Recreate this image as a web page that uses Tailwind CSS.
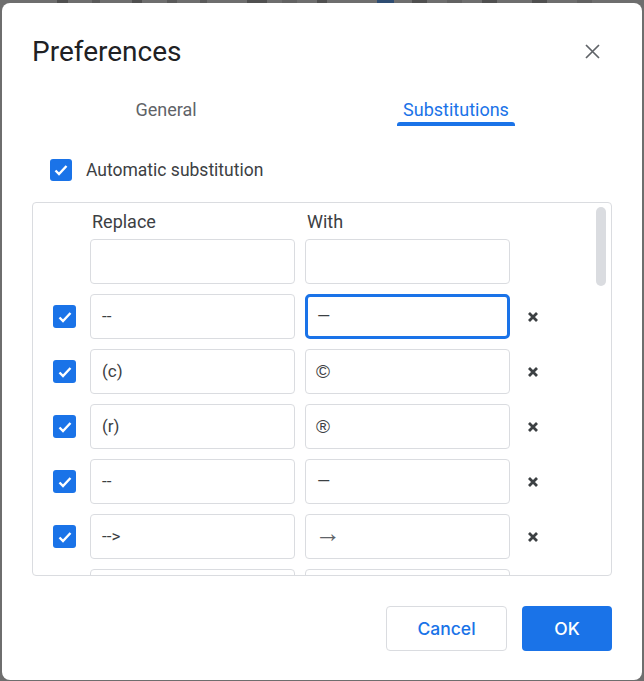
<!DOCTYPE html>
<html lang="en">
<head>
<meta charset="UTF-8">
<title>Preferences</title>
<script src="https://cdn.jsdelivr.net/npm/@tailwindcss/browser@4"></script>
</head>
<body class="bg-[#6e6e6e] h-[681px] w-[644px] overflow-hidden font-['Roboto',sans-serif]">

<!-- Bits of the toolbar behind the backdrop -->
<div class="flex h-[3px] items-start">
    <span class="ml-[57px] w-[11px] h-[3px] bg-[#505050]"></span>
    <span class="ml-[24px] w-[8px] h-[3px] bg-[#5a5a5a]"></span>
    <span class="ml-[32px] w-[10px] h-[3px] bg-[#505050]"></span>
    <span class="ml-[25px] w-[10px] h-[3px] bg-[#5a5a5a]"></span>
    <span class="ml-[23px] w-[7px] h-[3px] bg-[#5a5a5a]"></span>
    <span class="ml-[40px] w-[20px] h-[3px] bg-[#505050]"></span>
    <span class="ml-[15px] w-[15px] h-[3px] bg-[#626262]"></span>
    <span class="ml-[20px] w-[10px] h-[3px] bg-[#505050]"></span>
    <span class="ml-[50px] w-[17px] h-[3px] bg-[#2f4d72]"></span>
    <span class="ml-[18px] w-[15px] h-[3px] bg-[#505050]"></span>
    <span class="ml-[20px] w-[15px] h-[3px] bg-[#626262]"></span>
    <span class="ml-[20px] w-[15px] h-[3px] bg-[#505050]"></span>
    <span class="ml-[35px] w-[15px] h-[3px] bg-[#505050]"></span>
    <span class="ml-[30px] w-[15px] h-[3px] bg-[#626262]"></span>
</div>

<!-- Dialog -->
<div class="ml-[2px] w-[640px] h-[677px] bg-white rounded-[8px] flex flex-col pl-[30px] pr-[30px]">

    <!-- Title -->
    <div class="flex items-center justify-between h-[72px] pt-[24px]">
        <h1 class="text-[28px] leading-[40px] pt-[1px] text-[#202124]">Preferences</h1>
        <svg class="w-[15px] h-[15px] mr-[12px]" viewBox="0 0 15 15" fill="none" stroke="#5f6368" stroke-width="1.7"><path d="M1 1l13 13M14 1L1 14"/></svg>
    </div>

    <!-- Tabs -->
    <div class="flex mt-[16px] h-[35px] text-[18px]">
        <div class="w-[268px] text-center text-[#5f6368] leading-[38px]">General</div>
        <div class="ml-[97px] w-[118px] h-[35px] flex flex-col justify-between text-center text-[#1a73e8]">
            <div class="leading-[38px] h-[31px]">Substitutions</div>
            <div class="h-[4px] rounded-t-[3px] bg-[#1a73e8]"></div>
        </div>
    </div>

    <!-- Automatic substitution -->
    <div class="flex items-center mt-[32px] ml-[18px] h-[24px] gap-[14px]">
        <span class="w-[22px] h-[22px] rounded-[3px] bg-[#1a73e8] flex items-center justify-center">
            <svg class="w-[16px] h-[16px]" viewBox="0 0 16 16" fill="none" stroke="#fff" stroke-width="2.4"><path d="M2.5 8.5l3.5 3.5 7.5-8"/></svg>
        </span>
        <span class="text-[17.5px] text-[#3c4043]">Automatic substitution</span>
    </div>

    <!-- Table -->
    <div class="relative mt-[20px] h-[374px] w-[580px] border border-[#dadce0] rounded-[4px] overflow-hidden">
        <div class="absolute right-[5px] top-[4px] w-[10px] h-[79px] rounded-[5px] bg-[#dadce0]"></div>

        <div class="pl-[57px] flex gap-[10px] h-[36px] items-end pb-[4px] text-[18px] text-[#3c4043]">
            <div class="w-[205px] pl-[2px]">Replace</div>
            <div class="w-[205px] pl-[2px]">With</div>
        </div>

        <div class="pl-[57px] flex gap-[10px]">
            <div class="w-[205px] h-[45px] border border-[#dadce0] rounded-[4px]"></div>
            <div class="w-[205px] h-[45px] border border-[#dadce0] rounded-[4px]"></div>
        </div>

        <div class="flex items-center mt-[10px] h-[45px]">
            <span class="ml-[20px] mr-[14px] w-[23px] h-[23px] rounded-[3px] bg-[#1a73e8] flex items-center justify-center"><svg class="w-[16px] h-[16px]" viewBox="0 0 16 16" fill="none" stroke="#fff" stroke-width="2.4"><path d="M2.5 8.5l3.5 3.5 7.5-8"/></svg></span>
            <div class="w-[205px] h-[45px] border border-[#dadce0] rounded-[4px] pl-[11px] leading-[43px] text-[17px] text-[#3c4043]">--</div>
            <div class="ml-[10px] w-[205px] h-[45px] border-[3px] border-[#1a73e8] rounded-[5px] pl-[9px] leading-[39px] text-[17px] text-[#3c4043]">—</div>
            <svg class="ml-[18px] w-[10px] h-[10px]" viewBox="0 0 10 10" fill="none" stroke="#3c4043" stroke-width="2.8"><path d="M1 1l8 8M9 1L1 9"/></svg>
        </div>

        <div class="flex items-center mt-[10px] h-[45px]">
            <span class="ml-[20px] mr-[14px] w-[23px] h-[23px] rounded-[3px] bg-[#1a73e8] flex items-center justify-center"><svg class="w-[16px] h-[16px]" viewBox="0 0 16 16" fill="none" stroke="#fff" stroke-width="2.4"><path d="M2.5 8.5l3.5 3.5 7.5-8"/></svg></span>
            <div class="w-[205px] h-[45px] border border-[#dadce0] rounded-[4px] pl-[11px] leading-[43px] text-[17px] text-[#3c4043]">(c)</div>
            <div class="ml-[10px] w-[205px] h-[45px] border border-[#dadce0] rounded-[4px] pl-[10px] leading-[43px] text-[19px] text-[#3c4043] font-['Liberation_Sans',sans-serif]">©</div>
            <svg class="ml-[18px] w-[10px] h-[10px]" viewBox="0 0 10 10" fill="none" stroke="#3c4043" stroke-width="2.8"><path d="M1 1l8 8M9 1L1 9"/></svg>
        </div>

        <div class="flex items-center mt-[10px] h-[45px]">
            <span class="ml-[20px] mr-[14px] w-[23px] h-[23px] rounded-[3px] bg-[#1a73e8] flex items-center justify-center"><svg class="w-[16px] h-[16px]" viewBox="0 0 16 16" fill="none" stroke="#fff" stroke-width="2.4"><path d="M2.5 8.5l3.5 3.5 7.5-8"/></svg></span>
            <div class="w-[205px] h-[45px] border border-[#dadce0] rounded-[4px] pl-[11px] leading-[43px] text-[17px] text-[#3c4043]">(r)</div>
            <div class="ml-[10px] w-[205px] h-[45px] border border-[#dadce0] rounded-[4px] pl-[10px] leading-[43px] text-[19px] text-[#3c4043] font-['Liberation_Sans',sans-serif]">®</div>
            <svg class="ml-[18px] w-[10px] h-[10px]" viewBox="0 0 10 10" fill="none" stroke="#3c4043" stroke-width="2.8"><path d="M1 1l8 8M9 1L1 9"/></svg>
        </div>

        <div class="flex items-center mt-[10px] h-[45px]">
            <span class="ml-[20px] mr-[14px] w-[23px] h-[23px] rounded-[3px] bg-[#1a73e8] flex items-center justify-center"><svg class="w-[16px] h-[16px]" viewBox="0 0 16 16" fill="none" stroke="#fff" stroke-width="2.4"><path d="M2.5 8.5l3.5 3.5 7.5-8"/></svg></span>
            <div class="w-[205px] h-[45px] border border-[#dadce0] rounded-[4px] pl-[11px] leading-[43px] text-[17px] text-[#3c4043]">--</div>
            <div class="ml-[10px] w-[205px] h-[45px] border border-[#dadce0] rounded-[4px] pl-[11px] leading-[43px] text-[17px] text-[#3c4043]">—</div>
            <svg class="ml-[18px] w-[10px] h-[10px]" viewBox="0 0 10 10" fill="none" stroke="#3c4043" stroke-width="2.8"><path d="M1 1l8 8M9 1L1 9"/></svg>
        </div>

        <div class="flex items-center mt-[10px] h-[45px]">
            <span class="ml-[20px] mr-[14px] w-[23px] h-[23px] rounded-[3px] bg-[#1a73e8] flex items-center justify-center"><svg class="w-[16px] h-[16px]" viewBox="0 0 16 16" fill="none" stroke="#fff" stroke-width="2.4"><path d="M2.5 8.5l3.5 3.5 7.5-8"/></svg></span>
            <div class="w-[205px] h-[45px] border border-[#dadce0] rounded-[4px] pl-[11px] leading-[43px] text-[17px] text-[#3c4043]">--&gt;</div>
            <div class="ml-[10px] w-[205px] h-[45px] border border-[#dadce0] rounded-[4px] pl-[9px] leading-[37px] text-[26px] text-[#5f6368] font-['Liberation_Serif',serif]">→</div>
            <svg class="ml-[18px] w-[10px] h-[10px]" viewBox="0 0 10 10" fill="none" stroke="#3c4043" stroke-width="2.8"><path d="M1 1l8 8M9 1L1 9"/></svg>
        </div>

        <div class="pl-[57px] flex gap-[10px] mt-[10px]">
            <div class="w-[205px] h-[45px] border border-[#dadce0] rounded-[4px]"></div>
            <div class="w-[205px] h-[45px] border border-[#dadce0] rounded-[4px]"></div>
        </div>
    </div>

    <!-- Buttons -->
    <div class="flex justify-end gap-[15px] mt-[30px] w-[580px] font-['Inter',sans-serif] text-[17.5px] font-medium">
        <button class="w-[121px] h-[45px] pt-[1px] border border-[#dadce0] rounded-[4px] text-[#1a73e8]">Cancel</button>
        <button class="w-[90px] h-[45px] pt-[1px] rounded-[4px] bg-[#1a73e8] text-white">OK</button>
    </div>
</div>

</body>
</html>
